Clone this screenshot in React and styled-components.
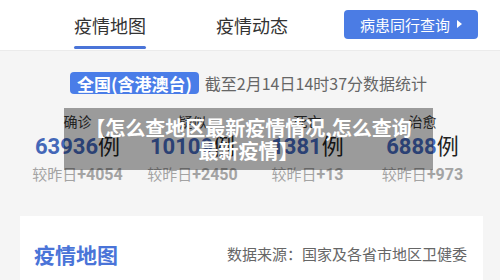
import React from 'react';
import styled, { createGlobalStyle } from 'styled-components';

const Global = createGlobalStyle`
  body {
    margin: 0;
    background: #f5f5f5;
    font-family: "Noto Sans CJK SC", "Noto Sans", sans-serif;
  }
`;

const Page = styled.div`
  width: 500px;
  height: 280px;
  overflow: hidden;
  background: #f5f5f5;
`;

const TopBar = styled.div`
  height: 50px;
  background: #fff;
  border-bottom: 1px solid #ebebeb;
  display: flex;
  align-items: stretch;
  padding-left: 74px;
`;

const Tab = styled.div`
  position: relative;
  display: flex;
  align-items: center;
  font-size: 18px;
  color: #333;
  margin-right: ${p => p.$gap}px;
  &::after {
    content: '';
    display: ${p => (p.$active ? 'block' : 'none')};
    position: absolute;
    left: 0;
    right: 0;
    bottom: 1px;
    height: 3px;
    border-radius: 2px;
    background: #4a74d8;
  }
`;

const QueryButton = styled.div`
  align-self: center;
  height: 29px;
  width: 134px;
  box-sizing: border-box;
  background: #4b7ce4;
  border-radius: 4px;
  color: #fff;
  font-size: 15px;
  display: flex;
  align-items: center;
  justify-content: center;
  gap: 7px;
  margin-top: -2px;
`;

const Arrow = styled.span`
  width: 0;
  height: 0;
  border-top: 4px solid transparent;
  border-bottom: 4px solid transparent;
  border-left: 5px solid #fff;
`;

const Summary = styled.div`
  position: relative;
  padding: 20px 20px 31px;
`;

const InfoRow = styled.div`
  display: flex;
  align-items: center;
  padding-left: 50px;
  gap: 6px;
`;

const Badge = styled.div`
  height: 22px;
  padding: 0 7px;
  border-radius: 4px;
  background: #4a7de8;
  color: #fff;
  font-size: 17px;
  font-weight: 700;
  display: flex;
  align-items: center;
`;

const Stamp = styled.div`
  font-size: 16px;
  color: #666;
`;

const Stats = styled.div`
  display: grid;
  grid-template-columns: repeat(4, 1fr);
  margin-top: 17px;
`;

const Stat = styled.div`
  display: flex;
  flex-direction: column;
  align-items: center;
`;

const Label = styled.div`
  font-size: 14px;
  line-height: 18px;
  color: #333;
`;

const Value = styled.div`
  line-height: 26px;
  margin-top: 1px;
  font-size: 22px;
  color: #222;
  white-space: nowrap;
`;

const Num = styled.span`
  font-family: Roboto, "Liberation Sans", sans-serif;
  font-weight: 700;
  color: #4467b8;
`;

const Change = styled.div`
  margin-top: 4px;
  line-height: 20px;
  font-size: 15px;
  color: #a3a3a3;
  white-space: nowrap;
  b {
    font-family: Roboto, "Liberation Sans", sans-serif;
    font-size: 16px;
    font-weight: 700;
  }
`;

const Overlay = styled.div`
  position: absolute;
  left: 64px;
  top: 57px;
  width: 369px;
  height: 62px;
  background: rgba(0, 0, 0, 0.37);
  color: #fff;
  font-size: 20px;
  font-weight: 700;
  line-height: 23px;
  text-align: center;
  display: flex;
  align-items: center;
  justify-content: center;
  padding: 0 16px;
  box-sizing: border-box;
`;

const Card = styled.div`
  margin-left: 20px;
  width: 463px;
  height: 80px;
  background: #fff;
  display: flex;
  align-items: flex-start;
  justify-content: space-between;
  padding: 23px 16px 0 14px;
  box-sizing: border-box;
`;

const CardTitle = styled.div`
  font-size: 21px;
  font-weight: 700;
  color: #4a74d8;
`;

const Source = styled.div`
  font-size: 15px;
  color: #666;
  margin-top: 4px;
`;

const stats = [
  { label: '确诊', value: '63936', diff: '4054' },
  { label: '疑似', value: '10109', diff: '2450' },
  { label: '死亡', value: '1381', diff: '13' },
  { label: '治愈', value: '6888', diff: '973' },
];

export default function App() {
  return (
    <Page>
      <Global />
      <TopBar>
        <Tab $active $gap={70}>疫情地图</Tab>
        <Tab $gap={56}>疫情动态</Tab>
        <QueryButton>
          病患同行查询
          <Arrow />
        </QueryButton>
      </TopBar>
      <Summary>
        <InfoRow>
          <Badge>全国(含港澳台)</Badge>
          <Stamp>截至2月14日14时37分数据统计</Stamp>
        </InfoRow>
        <Stats>
          {stats.map(s => (
            <Stat key={s.label}>
              <Label>{s.label}</Label>
              <Value>
                <Num>{s.value}</Num>例
              </Value>
              <Change>
                较昨日<b>+{s.diff}</b>
              </Change>
            </Stat>
          ))}
        </Stats>
        <Overlay>【怎么查地区最新疫情情况,怎么查询最新疫情】</Overlay>
      </Summary>
      <Card>
        <CardTitle>疫情地图</CardTitle>
        <Source>数据来源：国家及各省市地区卫健委</Source>
      </Card>
    </Page>
  );
}
